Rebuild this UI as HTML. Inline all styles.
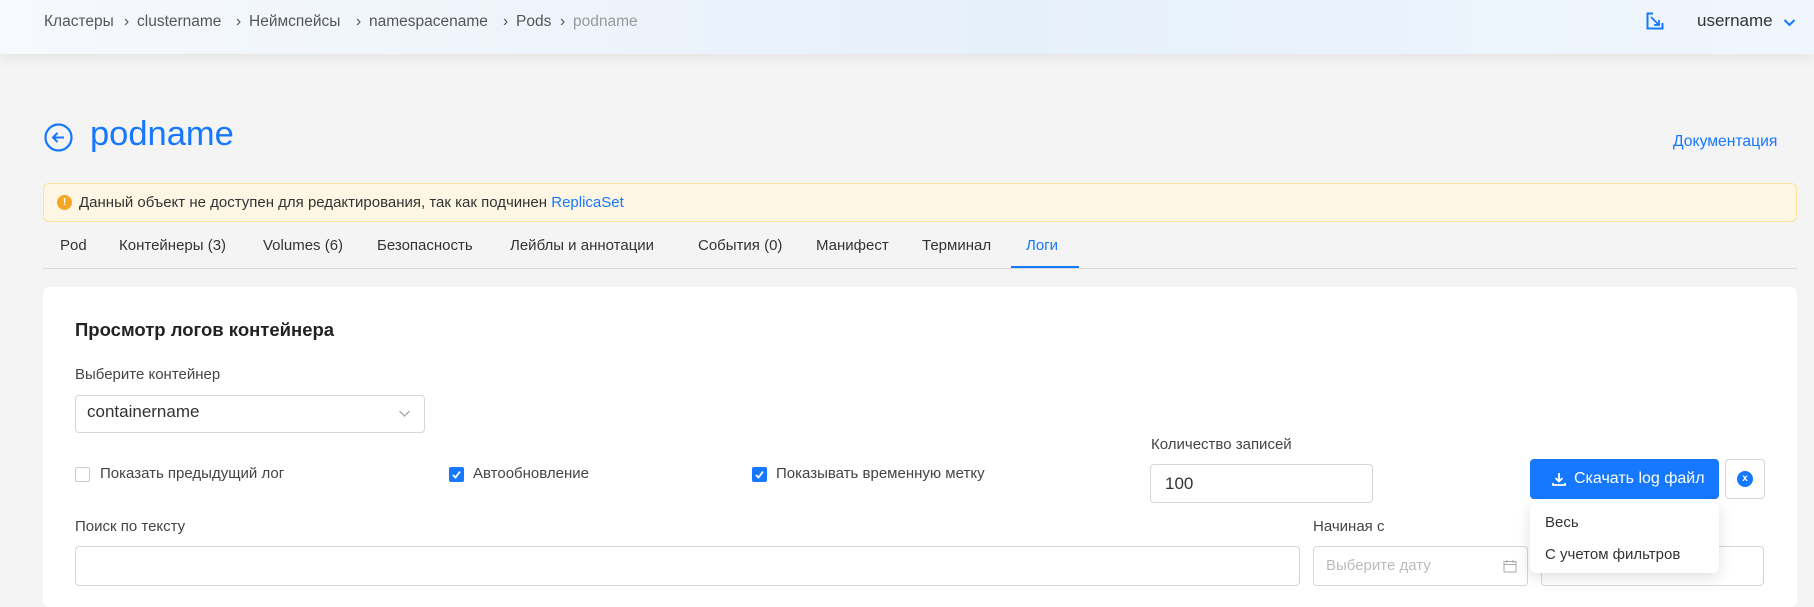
<!DOCTYPE html>
<html><head><meta charset="utf-8"><style>
*{box-sizing:border-box;margin:0;padding:0}
body{width:1814px;height:595px;overflow:hidden;background:#f4f4f4;font-family:"Liberation Sans",sans-serif;color:#333;position:relative}
.a{position:absolute;white-space:nowrap}
.hdr{position:absolute;left:0;top:0;width:1814px;height:54px;background:linear-gradient(90deg,#f6f9fd 0%,#eef4fb 30%,#e6f0fb 55%,#eaf3fc 75%,#f0f6fd 100%);box-shadow:0 4px 14px rgba(0,0,0,.07)}
.bc{font-size:15.5px;color:#555;top:13px}
.inp{position:absolute;background:#fff;border:1px solid #d6d6d6;border-radius:4px}
.lbl{font-size:15px;color:#444}
.tab{font-size:15px;color:#333;top:237px}
.cb{position:absolute;width:15px;height:15px;border-radius:2px;top:467px}
</style></head><body>
<div class="hdr"></div>
<div class="a bc" style="left:44px">Кластеры</div>
<div class="a bc" style="left:124px">›</div>
<div class="a bc" style="left:137px">clustername</div>
<div class="a bc" style="left:236px">›</div>
<div class="a bc" style="left:249px">Неймспейсы</div>
<div class="a bc" style="left:356px">›</div>
<div class="a bc" style="left:369px">namespacename</div>
<div class="a bc" style="left:503px">›</div>
<div class="a bc" style="left:516px">Pods</div>
<div class="a bc" style="left:560px">›</div>
<div class="a bc" style="left:573px;color:#999">podname</div>
<svg class="a" style="left:1646px;top:12px" width="18" height="18" viewBox="0 0 18 18"><path d="M7 1.5H1.5v15h15V11" fill="none" stroke="#1677ff" stroke-width="2"/><path d="M5 5l8 8M8 13h5V8" fill="none" stroke="#1677ff" stroke-width="1.8"/></svg>
<div class="a" style="left:1697px;top:11px;font-size:17px;color:#333">username</div>
<svg class="a" style="left:1783px;top:18px" width="13" height="9" viewBox="0 0 13 9"><path d="M1.5 2l5 5 5-5" fill="none" stroke="#1677ff" stroke-width="2"/></svg>

<svg class="a" style="left:44px;top:123px" width="29" height="29" viewBox="0 0 29 29"><circle cx="14.5" cy="14.5" r="13" fill="none" stroke="#1677ff" stroke-width="2.2"/><path d="M20 14.5H9M13.5 10l-4.5 4.5 4.5 4.5" fill="none" stroke="#1677ff" stroke-width="2"/></svg>
<div class="a" style="left:90px;top:115px;font-size:34.5px;color:#1677ff">podname</div>
<div class="a" style="left:1673px;top:133px;font-size:15.7px;color:#1677ff">Документация</div>

<div class="a" style="left:43px;top:183px;width:1754px;height:39px;background:#fdf6e4;border:1px solid #fbe29a;border-radius:6px"></div>
<div class="a" style="left:57px;top:195px;width:15px;height:15px;border-radius:50%;background:#f5a623;color:#fff;font-size:10px;text-align:center;line-height:15px;font-weight:bold">!</div>
<div class="a" style="left:79px;top:194px;font-size:15px;color:#333">Данный объект не доступен для редактирования, так как подчинен <span style="color:#1677ff">ReplicaSet</span></div>

<div class="a tab" style="left:60px">Pod</div>
<div class="a tab" style="left:119px">Контейнеры (3)</div>
<div class="a tab" style="left:263px">Volumes (6)</div>
<div class="a tab" style="left:377px">Безопасность</div>
<div class="a tab" style="left:510px">Лейблы и аннотации</div>
<div class="a tab" style="left:698px">События (0)</div>
<div class="a tab" style="left:816px">Манифест</div>
<div class="a tab" style="left:922px">Терминал</div>
<div class="a tab" style="left:1026px;color:#1677ff">Логи</div>
<div class="a" style="left:43px;top:268px;width:1754px;height:1px;background:#d9d9d9"></div>
<div class="a" style="left:1011px;top:266px;width:68px;height:2px;background:#1677ff"></div>

<div class="a" style="left:43px;top:287px;width:1754px;height:320px;background:#fff;border-radius:6px"></div>
<div class="a" style="left:75px;top:319px;font-size:18.5px;font-weight:600;color:#222">Просмотр логов контейнера</div>
<div class="a lbl" style="left:75px;top:366px">Выберите контейнер</div>
<div class="inp" style="left:75px;top:395px;width:350px;height:38px"></div>
<div class="a" style="left:87px;top:402px;font-size:17px;color:#333">containername</div>
<svg class="a" style="left:398px;top:409px" width="13" height="9" viewBox="0 0 13 9"><path d="M1.5 2l5 5 5-5" fill="none" stroke="#aaa" stroke-width="1.4"/></svg>

<div class="cb" style="left:75px;border:1px solid #ccc;background:#fff"></div>
<div class="a lbl" style="left:100px;top:465px">Показать предыдущий лог</div>
<div class="cb" style="left:449px;background:#1677ff"></div>
<svg class="a" style="left:451px;top:469px" width="11" height="11" viewBox="0 0 11 11"><path d="M2 6l2.5 2.5L9 2.5" fill="none" stroke="#fff" stroke-width="1.8"/></svg>
<div class="a lbl" style="left:473px;top:465px">Автообновление</div>
<div class="cb" style="left:752px;background:#1677ff"></div>
<svg class="a" style="left:754px;top:469px" width="11" height="11" viewBox="0 0 11 11"><path d="M2 6l2.5 2.5L9 2.5" fill="none" stroke="#fff" stroke-width="1.8"/></svg>
<div class="a lbl" style="left:776px;top:465px">Показывать временную метку</div>

<div class="a lbl" style="left:1151px;top:436px">Количество записей</div>
<div class="inp" style="left:1150px;top:464px;width:223px;height:39px"></div>
<div class="a" style="left:1165px;top:474px;font-size:17px">100</div>

<div class="a" style="left:1530px;top:459px;width:189px;height:40px;background:#1677ff;border-radius:4px"></div>
<svg class="a" style="left:1551px;top:471px" width="16" height="16" viewBox="0 0 16 16"><path d="M8 2v8M4.5 7L8 10.5 11.5 7M2 12v2h12v-2" fill="none" stroke="#fff" stroke-width="1.8"/></svg>
<div class="a" style="left:1574px;top:470px;font-size:16px;color:#fff">Скачать log файл</div>
<div class="inp" style="left:1725px;top:459px;width:40px;height:40px"></div>
<div class="a" style="left:1737px;top:471px;width:16px;height:16px;border-radius:50%;background:#1677ff;color:#fff;font-size:10px;text-align:center;line-height:15px;font-weight:bold">x</div>

<div class="a lbl" style="left:75px;top:518px">Поиск по тексту</div>
<div class="inp" style="left:75px;top:546px;width:1225px;height:40px"></div>
<div class="a lbl" style="left:1313px;top:518px">Начиная с</div>
<div class="inp" style="left:1313px;top:546px;width:215px;height:40px"></div>
<div class="a" style="left:1326px;top:557px;font-size:15px;color:#bbb">Выберите дату</div>
<svg class="a" style="left:1503px;top:559px" width="14" height="14" viewBox="0 0 14 14"><rect x="1" y="2.5" width="12" height="10.5" fill="none" stroke="#aaa"/><path d="M1 5.5h12M4 1v3M10 1v3" stroke="#aaa"/></svg>
<div class="inp" style="left:1541px;top:546px;width:223px;height:40px"></div>

<div class="a" style="left:1530px;top:503px;width:189px;height:70px;background:#fff;border-radius:6px;box-shadow:0 4px 14px rgba(0,0,0,.13)"></div>
<div class="a" style="left:1545px;top:514px;font-size:15px">Весь</div>
<div class="a" style="left:1545px;top:546px;font-size:15px">С учетом фильтров</div>
</body></html>
